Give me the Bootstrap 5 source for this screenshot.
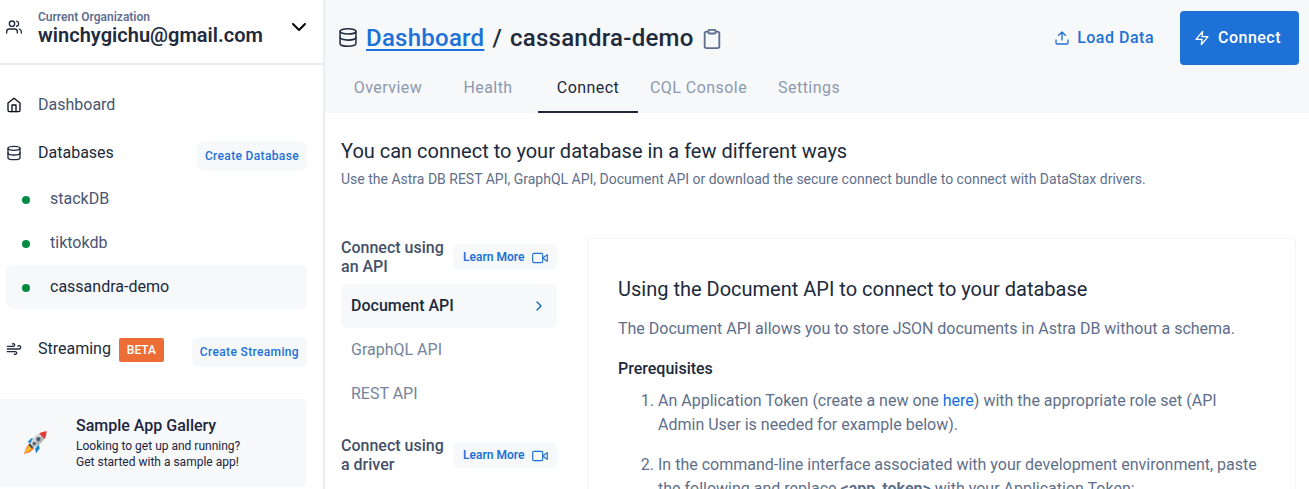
<!DOCTYPE html>
<html lang="en">
<head>
<meta charset="utf-8">
<title>cassandra-demo</title>
<link rel="stylesheet" href="https://cdn.jsdelivr.net/npm/bootstrap@5.3.0/dist/css/bootstrap.min.css">
<style>
body{font-family:Roboto,"Liberation Sans",sans-serif;font-size:16px;color:#202a3c;height:489px;overflow:hidden;background:#fff}
a{text-decoration:none}
svg.ico{fill:none;stroke:currentColor;stroke-width:2;stroke-linecap:round;stroke-linejoin:round;flex:none;display:block}
.side{width:325px;height:489px;border-right:2px solid #e9edf2}
.org{height:65px;border-bottom:2px solid #e9edf2;padding:0 14px 2px 6px}
.org-icon{margin-top:-8px}
.org .chev{color:#000}
.org-label{font-size:12px;line-height:16px;font-weight:600;color:#5f6f8f}
.org-name{font-size:20px;line-height:20px;font-weight:600;letter-spacing:.02px}
.side-row{padding:0 16px 0 6px}
.side-home{height:79px}
.side-home svg{color:#0c0f14}
.side-dbs{height:33px}
.side-dbs svg,.side-dbs .label-txt{margin-bottom:15px}
.side-dbs .pill{margin-bottom:9px}
.side-stream{height:30px;margin-top:28px}
.side-stream svg,.side-stream .label-txt{margin-bottom:6px}
.side-row .label-txt{margin-left:16px;line-height:24px}
.muted{color:#49556f}
.pill{background:#f6f8fa;border-radius:6px;color:#1e71d7;font-size:12px;line-height:30px;height:30px;font-weight:500;letter-spacing:.35px;padding:0 8px}
.db{height:44px;margin:0 16px 0 6px;padding-left:16px;border-radius:6px;line-height:24px}
.db i{width:8px;height:8px;border-radius:50%;background:#048a43;margin-right:20px;margin-top:2px}
.db span{margin-bottom:1px}
.on{background:#f6f8fa}
.beta{background:#ec6d35;color:#fff;font-size:12px;line-height:24px;font-weight:500;border-radius:2px;width:45px;margin-left:8px;margin-bottom:4px}
.gallery{width:306px;height:88px;background:#f6f8fa;border-radius:0 4px 4px 0;padding-left:23px;margin-top:32px;color:#1e2540}
.gallery svg{margin-bottom:2px;flex:none}
.gallery-copy{margin-left:27px;font-size:12px;line-height:16px;padding-bottom:1px}
.gallery-title{font-size:16px;line-height:21px;font-weight:500;padding-bottom:2px}
.top{height:113px;background:#f6f8fa;padding-left:13px}
.title-row{height:63px;padding-top:11px;padding-right:10px}
.title-txt{height:54px;font-size:24px;line-height:30px;font-weight:500;letter-spacing:.25px}
.title-txt a{color:#1e71d7;text-decoration:underline;text-decoration-thickness:2px;text-underline-offset:3px}
.title-txt .db-ico{margin-right:8px;margin-bottom:2px;stroke-width:1.8}
.title-txt .clip{color:#5f6f8f;margin-left:7px;margin-top:2px}
.slash{margin:0 8px}
.tab{min-width:100px;height:50px;padding:0 12px;line-height:49px;letter-spacing:.45px;color:#8d99ae;text-align:center}
.tab.sel{color:#202a3c;border-bottom:2px solid #202a3c}
.actions{height:54px}
.load{color:#1e71d7;font-weight:500;letter-spacing:.5px;gap:7px}
.go{width:119px;height:54px;background:#1e71d7;color:#fff;border-radius:4px;font-weight:500;letter-spacing:.5px;margin-left:26px;padding-right:4px;gap:8px}
.intro{padding:24px 0 0 16px}
.h20{font-size:20px;line-height:28px;font-weight:400;margin:0;color:#202a3c}
.sub{font-size:14px;line-height:20px;color:#5f6f8b;margin:4px 0 49px}
.api{width:216px}
.api-head{height:44px;line-height:19px;font-weight:500;color:#44506a}
.api-head.next{margin-top:20px}
.learn{width:104px;height:26px;background:#f6f8fa;border-radius:6px;color:#1e71d7;font-size:12px;font-weight:600;padding-left:10px;margin-top:6px;gap:8px}
.learn svg{stroke-width:1.7;margin-top:1px}
.api-item{height:44px;line-height:44px;padding:0 10px;border-radius:6px;color:#75849c}
.api-item.sel{color:#202a3c;font-weight:500;background:#f6f8fa;margin-top:2px}
.api-item svg{color:#0f68a8}
.doc{width:709px;height:300px;border:1px solid #f3f5f7;border-radius:4px;margin-left:30px;padding:36px 30px 0;color:#5f6f8b}
.doc p{line-height:24px;margin:14px 0 16px}
.prereq{font-weight:500;line-height:24px;color:#202a3c}
.doc ol{padding-left:40px;margin:8px 0 0;line-height:24px}
.doc li{margin-bottom:16px}
.doc li a{color:#0f6ee0}
</style>
<script src="https://cdn.jsdelivr.net/npm/bootstrap@5.3.0/dist/js/bootstrap.bundle.min.js"></script>
</head>
<body class="d-flex">
<aside class="side flex-shrink-0">
  <div class="org d-flex align-items-center">
    <svg class="ico org-icon" width="16" height="16" viewBox="0 0 24 24"><path d="M17 21v-2a4 4 0 0 0-4-4H5a4 4 0 0 0-4 4v2"/><circle cx="9" cy="7" r="4"/><path d="M23 21v-2a4 4 0 0 0-3-3.87M16 3.13a4 4 0 0 1 0 7.75"/></svg>
    <div class="ms-3 pb-2"><div class="org-label">Current Organization</div><div class="org-name">winchygichu@gmail.com</div></div>
    <svg class="ico chev ms-auto mb-2" width="20" height="20" viewBox="0 0 20 20"><path d="M4 7l6 6 6-6"/></svg>
  </div>
  <nav>
    <div class="side-row side-home d-flex align-items-center">
      <svg class="ico" width="16" height="16" viewBox="0 0 24 24"><path d="M3 9l9-7 9 7v11a2 2 0 0 1-2 2H5a2 2 0 0 1-2-2z"/><path d="M9 22V12h6v10"/></svg>
      <span class="label-txt muted">Dashboard</span>
    </div>
    <div class="side-row side-dbs d-flex align-items-center">
      <svg class="ico" width="16" height="16" viewBox="0 0 24 24"><ellipse cx="12" cy="5" rx="9" ry="3"/><path d="M21 12c0 1.660-4 3-9 3s-9-1.340-9-3"/><path d="M3 5v14c0 1.660 4 3 9 3s9-1.340 9-3V5"/></svg>
      <span class="label-txt">Databases</span>
      <a href="#" class="pill ms-auto">Create Database</a>
    </div>
    <div class="db d-flex align-items-center muted"><i></i><span>stackDB</span></div>
    <div class="db d-flex align-items-center muted"><i></i><span>tiktokdb</span></div>
    <div class="db on d-flex align-items-center"><i></i><span>cassandra-demo</span></div>
    <div class="side-row side-stream d-flex align-items-center">
      <svg class="ico" width="16" height="16" viewBox="0 0 24 24"><path d="M9.590 4.590A2 2 0 1 1 11 8H2m10.590 11.410A2 2 0 1 0 14 16H2m15.730-8.270A2.500 2.500 0 1 1 19.500 12H2"/></svg>
      <span class="label-txt">Streaming</span><span class="beta text-center">BETA</span>
      <a href="#" class="pill ms-auto">Create Streaming</a>
    </div>
    <div class="gallery d-flex align-items-center">
      <svg width="26" height="26" viewBox="0 0 28 28">
        <path d="M5 14l4-4 5 1-4 5zM13 21l1 5 4-5-1-4z" fill="#1685d2"/>
        <path d="M7 16l-3 3-3 8 6-2 5-4z" fill="#f36c21"/><path d="M6 18l-3 5-1 3 4-2 4-3z" fill="#fdbf2d"/>
        <path d="M6 17l3 4 3-1-5-5z" fill="#444f58"/>
        <path d="M8 15C11 8 18 3 25 3c-.5 8-6 14-14 17z" fill="#d2d5d8"/><path d="M11 20c8-3 13-9 14-17L9.500 17z" fill="#afb4b9"/>
        <path d="M17.500 4.800C20 3.400 22.500 3 25.500 2.500 25.200 6 24.500 8.500 23.300 10.800z" fill="#e53935"/>
        <circle cx="16.500" cy="10.800" r="2.300" fill="#4b5963"/><circle cx="12" cy="15.500" r="1.600" fill="#4b5963"/>
      </svg>
      <div class="gallery-copy"><div class="gallery-title">Sample App Gallery</div>Looking to get up and running?<br>Get started with a sample app!</div>
    </div>
  </nav>
</aside>
<main class="flex-grow-1">
  <header class="top">
    <div class="title-row d-flex">
      <div class="title-txt d-flex align-items-center">
        <svg class="ico db-ico" width="20" height="21" viewBox="0 0 24 24" preserveAspectRatio="none"><ellipse cx="12" cy="5" rx="9.500" ry="3"/><path d="M21.500 12c0 1.660-4 3-9.500 3s-9.500-1.340-9.500-3"/><path d="M2.500 5v14c0 1.660 4 3 9.500 3s9.500-1.340 9.500-3V5"/></svg>
        <a href="#">Dashboard</a><span class="slash">/</span><span>cassandra-demo</span>
        <svg class="ico clip" width="22" height="22" viewBox="0 0 24 24"><path d="M16 4h2a2 2 0 0 1 2 2v14a2 2 0 0 1-2 2H6a2 2 0 0 1-2-2V6a2 2 0 0 1 2-2h2"/><rect x="8" y="2" width="8" height="4" rx="1"/></svg>
      </div>
      <div class="actions ms-auto d-flex align-items-center">
        <a href="#" class="load d-flex align-items-center"><svg class="ico" width="16" height="16" viewBox="0 0 24 24"><path d="M21 15v4a2 2 0 0 1-2 2H5a2 2 0 0 1-2-2v-4M17 8l-5-5-5 5M12 3v12"/></svg>Load Data</a>
        <a href="#" class="go d-flex align-items-center justify-content-center"><svg class="ico" width="16" height="16" viewBox="0 0 24 24"><path d="M13 2L3 14h9l-1 8 10-12h-9l1-8z"/></svg>Connect</a>
      </div>
    </div>
    <nav class="d-flex"><div class="tab">Overview</div><div class="tab">Health</div><div class="tab sel">Connect</div><div class="tab">CQL Console</div><div class="tab">Settings</div></nav>
  </header>
  <section class="intro">
    <h1 class="h20">You can connect to your database in a few different ways</h1>
    <p class="sub">Use the Astra DB REST API, GraphQL API, Document API or download the secure connect bundle to connect with DataStax drivers.</p>
    <div class="d-flex">
      <div class="api flex-shrink-0">
        <div class="api-head d-flex align-items-start justify-content-between"><div>Connect using<br>an API</div><a href="#" class="learn d-flex align-items-center">Learn More<svg class="ico" width="16" height="16" viewBox="0 0 24 24"><path d="M23 7l-7 5 7 5z"/><rect x="1" y="5" width="15" height="14" rx="2"/></svg></a></div>
        <div class="api-item sel d-flex align-items-center justify-content-between">Document API<svg class="ico" width="16" height="16" viewBox="0 0 24 24"><path d="M9 18l6-6-6-6"/></svg></div>
        <div class="api-item">GraphQL API</div>
        <div class="api-item">REST API</div>
        <div class="api-head next d-flex align-items-start justify-content-between"><div>Connect using<br>a driver</div><a href="#" class="learn d-flex align-items-center">Learn More<svg class="ico" width="16" height="16" viewBox="0 0 24 24"><path d="M23 7l-7 5 7 5z"/><rect x="1" y="5" width="15" height="14" rx="2"/></svg></a></div>
      </div>
      <article class="doc flex-shrink-0">
        <h2 class="h20">Using the Document API to connect to your database</h2>
        <p>The Document API allows you to store JSON documents in Astra DB without a schema.</p>
        <div class="prereq">Prerequisites</div>
        <ol><li>An Application Token (create a new one <a href="#">here</a>) with the appropriate role set (API Admin User is needed for example below).</li><li>In the command-line interface associated with your development environment, paste the following and replace <b>&lt;app_token&gt;</b> with your Application Token:</li></ol>
      </article>
    </div>
  </section>
</main>
</body>
</html>
